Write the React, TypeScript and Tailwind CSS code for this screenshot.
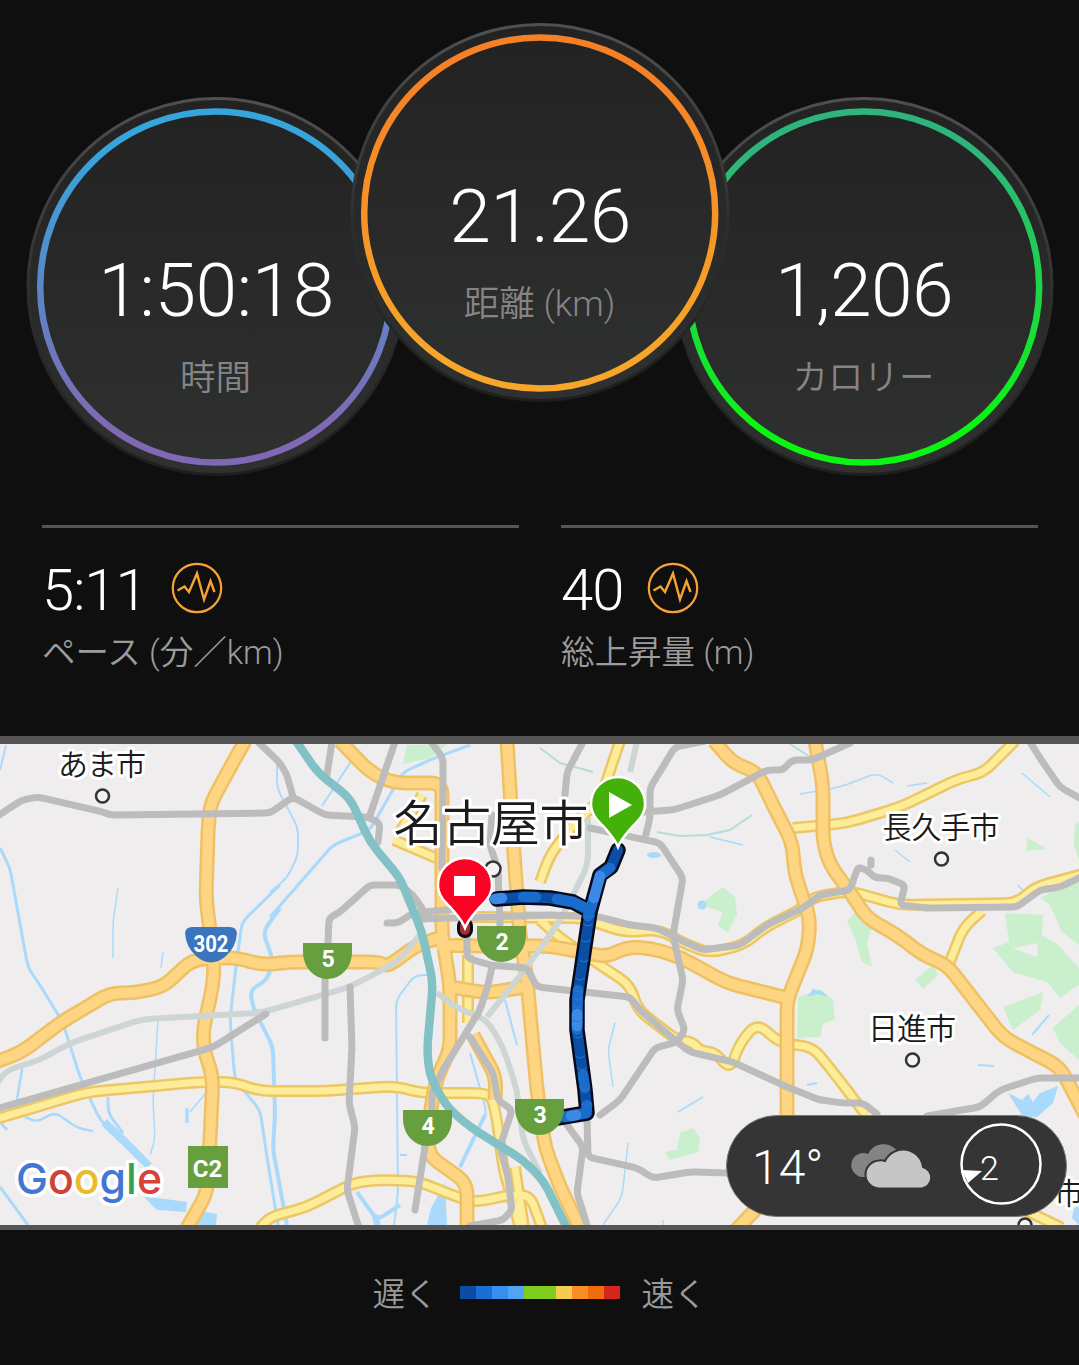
import { Fragment } from 'react';
import clsx from 'clsx';

const FONT = "font-['Roboto','Noto_Sans_CJK_JP',sans-serif]";

type RingProps = {
  id: string;
  value: string;
  label: string;
  from: string;
  to: string;
  className?: string;
};

function Ring({ id, value, label, from, to, className }: RingProps) {
  return (
    <div className={clsx('relative h-[380px] w-[380px] shrink-0', className)}>
      <svg viewBox="0 0 380 380" className="absolute inset-0 h-full w-full">
        <defs>
          <linearGradient id={`${id}-ring`} x1="0" y1="0" x2="0" y2="1">
            <stop offset="0.1" stopColor={from} />
            <stop offset="0.9" stopColor={to} />
          </linearGradient>
          <linearGradient id={`${id}-face`} x1="0" y1="0" x2="0" y2="1">
            <stop offset="0" stopColor="#222222" />
            <stop offset="1" stopColor="#2f3030" />
          </linearGradient>
          <linearGradient id={`${id}-rim`} x1="0" y1="0" x2="0" y2="1">
            <stop offset="0" stopColor="#505050" />
            <stop offset="0.55" stopColor="#2c2d2d" />
            <stop offset="1" stopColor="#1d1e1e" />
          </linearGradient>
        </defs>
        <circle cx="190" cy="189.500" r="188" fill={`url(#${id}-face)`} stroke={`url(#${id}-rim)`} strokeWidth="3" />
        <circle cx="189.700" cy="190" r="175.500" fill="none" stroke={`url(#${id}-ring)`} strokeWidth="6.500" />
      </svg>
      <div className="relative flex flex-col items-center pt-[148px]">
        <span className="pl-[1px] text-[75px] leading-[90px] font-light tracking-[-0.6px] text-white">{value}</span>
        <span className="mt-[15px] text-[35.5px] leading-[56px] font-[350] text-[#858585]">{label}</span>
      </div>
    </div>
  );
}

function PulseIcon() {
  return (
    <svg viewBox="0 0 52 52" className="-mt-[5px] h-[52px] w-[52px]" fill="none" stroke="#f6a336">
      <circle cx="26" cy="26" r="24.200" strokeWidth="2.200" />
      <path d="M6.500 28.500l7-4 4.500 5.500 8-18.500 7 26 6.500-18.500 4 11" strokeWidth="2.400" />
    </svg>
  );
}

function Stat({ value, label }: { value: string; label: string }) {
  return (
    <div className="flex-1 border-t-[3px] border-[#555] pt-[32px]">
      <div className="flex h-[60px] items-center gap-[24px]">
        <span className="text-[58px] leading-[60px] font-light tracking-[-1px] text-white">{value}</span>
        <PulseIcon />
      </div>
      <div className="text-[33.5px] leading-[66px] font-[350] whitespace-nowrap text-[#9c9c9c]">{label}</div>
    </div>
  );
}

const WATER = [
  { w: 3, d: 'M0 848L10 868L28 968L40 985L63 1023L80 1077L100 1120L127 1147' },
  { w: 8, d: 'M104 1122L127 1144L149 1166' },
  { w: 2.5, d: 'M23 1063L17 1100M25 1117L37 1122L55 1112L77 1128L93 1131' },
  { w: 3, d: 'M108 1097V1113L123 1133M0 1187L28 1225M187 1108V1123M0 1122L7 1130' },
  { w: 1.5, d: 'M118 888L113 922V958M163 952L161 968M158 1020L153 1100L155 1140L150 1155M205 1094L190 1112' },
  { w: 3, d: 'M280 885L242 922L235 975L230 1020L235 1080L260 1110L267 1157L278 1225' },
  { w: 4, d: 'M280 908L263 932L273 960L267 980L250 990L253 1007L273 1047L275 1113L273 1150L287 1225' },
  { w: 3, d: 'M270 917L333 845L370 830L403 772L437 757L470 745' },
  { w: 2, d: 'M277 762V788L298 828V855L287 878L270 892M352 760L322 806M0 770L6 745' },
  { w: 2, d: 'M432 975H415L396 1000L398 1193L394 1225M400 1155H407' },
  { w: 2, d: 'M470 1053L487 1113L460 1167' },
  { w: 4, d: 'M485 1115L460 1167M357 1192L377 1220L400 1205' },
  { w: 1.5, d: 'M615 1023L608 1050L613 1087M678 1112L703 1097M628 1143L622 1197L603 1225M663 1220V1225' },
  { w: 1.5, d: 'M710 837L743 845M800 794L840 787L877 773L893 783M907 786L927 783M1022 773L1050 797M895 850L910 862M1018 885L1025 893' },
  { w: 2, d: 'M1049 1015L1032 1035M978 1065L994 1066M807 1085L817 1083M505 1000L517 1045' },
];

const GREENS = [
  '403,764 407,745 447,744 430,758',
  '703,902 723,887 735,897 737,915 727,933 718,925 723,912 710,908',
  '847,922 857,910 872,928 867,942 872,967 862,962 855,938',
  '1028,838 1047,849 1026,851',
  '1040,898 1058,888 1079,882 1079,945 1062,932 1050,905',
  '1005,913 1043,915 1042,935 1056,943 1079,968 1079,985 1060,998 1047,982 1013,972 993,948 1009,942',
  '915,980 933,965 938,975 923,989',
  '1003,1007 1043,992 1040,1010 1013,1030',
  '1053,1028 1073,1010 1079,1005 1079,1060 1060,1043',
  '798,997 820,990 833,1000 835,1020 823,1023 820,1037 797,1038',
  '665,1152 677,1150 680,1133 693,1128 700,1138 698,1152 670,1160',
  '1075,825 1079,822 1079,860 1074,845',
];

const YELLOW_ROADS = [
  'M793 828L847 823L900 807L960 778L983 773L1015 741',
  'M-4 1119L40 1106L87 1092L200 1082H233L260 1091H327L393 1086L423 1093H483L492 1097L497 1120L503 1167L520 1228',
  'M260 1228L270 1217L307 1207L353 1183L377 1180L417 1181L460 1198L477 1202L510 1195H530L542 1228',
  'M394 840L436 858M400 832L422 795',
  'M620 741L600 800L573 825L550 855L540 882',
  'M540 920L560 938L600 965L630 985L638 1010L677 1040L693 1042L700 1051L715 1052L730 1070L740 1043L757 1023L780 1043L813 1047L837 1077L866 1115',
  'M470 917L583 918L623 932L660 930L687 945L710 953L743 945L767 926L800 910L813 897L850 891L900 905L1017 903L1035 887L1083 874',
  'M982 911L963 928L949 964',
  'M468 955V1023M1025 1210L1062 1228M515 1167L524 1228',
];

const ORANGE_ROADS = [
  'M245 741L226 775L210 805L208 830L206 900L210 930L214 965L213 985L203 1030L204 1050L213 1077L210 1140L207 1193L187 1228',
  'M-4 1062L22 1052L60 1023L110 993H133L163 987L192 960L233 957L263 965L290 962H380L387 967L417 945L442 937',
  'M340 741L370 772L393 783H442V935L450 985V1050L437 1077L430 1113L428 1155L467 1183V1228',
  'M507 741L515 868L520 935L527 980L537 1090L545 1147L560 1187L580 1228',
  'M437 945L480 946L550 946L607 957L627 947L650 948L680 957L727 983L787 998',
  'M714 741L733 763L757 772L773 805L792 842L795 875L810 918L808 948L787 1000V1116',
  'M815 741L823 785V842L830 865L850 892L867 918L897 935L923 955L947 965L1003 1037L1027 1050L1060 1067L1085 1115',
  'M450 987L487 993L525 987M473 1035L496 1077L495 1100M736 1230L760 1205',
];

const RAILS = [
  'M-4 817L22 800L38 797L103 812L110 815L270 813L293 797L325 815L367 817L380 823L378 842',
  'M258 742L280 763L287 775L293 797M332 742L327 775M395 742L370 815',
  'M431 742L443 758V788L442 868M492 815L490 845L498 870L500 925',
  'M328 942L329 918L340 912L370 885H400L413 895L422 908M325 980V1038',
  'M387 923H398L413 913L470 908M420 919L550 915L600 917L630 925L657 928L680 940L703 950L740 945L767 925L803 908L820 895L850 890L858 867L867 870L875 878H887L905 885L900 905L927 908L1017 907L1040 890L1060 887L1083 876',
  'M467 935V958L490 965L527 968L537 987L630 997L640 1010L677 1042L690 1052L733 1062L787 1087L820 1100L843 1103H863L877 1114M927 1116L980 1107L1000 1090L1037 1078H1083',
  'M350 987L352 1047L349 1103L355 1127L347 1190L359 1228',
  'M492 967L488 985L480 1010L443 1070L432 1093V1113M425 1147L415 1210',
  'M470 1037L493 1073L498 1100L512 1110L500 1147L508 1177L512 1210L503 1220L470 1226',
  'M583 742L567 772L565 795M705 741L675 747L650 788V818L645 838',
  'M643 812L673 810L720 795L767 770H783L792 760H812L850 743',
  'M590 828L623 835L660 843L683 878L673 935L683 980L677 1010L685 1030L677 1042L655 1048L620 1100L600 1115',
  'M587 1120L588 1157L637 1168L653 1178L690 1172L727 1173M565 1122L583 1147L577 1193L588 1228',
  'M1030 742L1040 758L1060 787L1083 800M-4 1109L203 1050L213 1047L266 1014M871 860V865',
];

const LIGHT_RAILS = [
  'M-3 1083L7 1070L40 1060L70 1043L143 1019L260 1013L350 987L397 962L420 935',
  'M437 993L457 1008L487 1020L503 1047L517 1090L523 1140L540 1173',
  'M487 1017L517 980L550 935L563 915L588 865V818M637 742L630 772',
];

const RIVER = [
  'M296 741L318 773L350 798L370 842L400 878L422 932L433 983L427 1050L430 1077L447 1107L470 1127L523 1160L543 1180L567 1228',
];

const ROUTE = 'M618 850L611 867L600 875L590 912L585 945L577 1000V1030L585 1090L587 1113L557 1118';
const ROUTE_BRANCH = 'M497 899L523 897L550 898L573 902L588 910';

const ROUTE_PARTS = [
  { c: '#0b4ea6', d: ROUTE },
  { c: '#0b4ea6', d: ROUTE_BRANCH },
  { c: '#1a6ccb', d: 'M523 897H536M557 899L573 902L588 909' },
  { c: '#3c8ae6', d: 'M495 899L502 898' },
  { c: '#1a6ccb', d: 'M610 868L601 875M594 898L588 916M578 990L577 1030M583 1075L585 1088M587 1105L586 1113L565 1117' },
  { c: '#3c8ae6', d: 'M600 876L594 898M577 1014V1026M576 1115L571 1116' },
];

// tick marks where the colour of the track changes slightly
const ROUTE_TICKS = [
  [590, 916], [588, 924], [586, 940], [584, 960], [580, 978], [578, 990], [577, 998],
  [577, 1006], [577, 1020], [578, 1036], [580, 1056], [582, 1068], [585, 1088], [586, 1104],
];

const PLACES = [
  { name: 'あま市', x: 102, y: 775, size: 30, width: 88, dot: [102.5, 796], r: 6.5 },
  { name: '長久手市', x: 941, y: 838, size: 30, width: 117, dot: [941.5, 859], r: 6.5 },
  { name: '日進市', x: 912, y: 1039, size: 30, width: 88, dot: [912.5, 1060], r: 6.5 },
  { name: '市', x: 1069, y: 1204, size: 30, width: 29, dot: [1025, 1225], r: 6.5 },
  { name: '名古屋市', x: 491, y: 841, size: 49, width: 195, dot: [493, 869], r: 7.5 },
];

const SHIELDS = [
  { n: '5', x: 303, y: 943 },
  { n: '2', x: 477, y: 926 },
  { n: '4', x: 403, y: 1110 },
  { n: '3', x: 515, y: 1099 },
];

const GOOGLE = [
  ['G', '#4176d3'],
  ['o', '#d04237'],
  ['o', '#e9bb2d'],
  ['g', '#4176d3'],
  ['l', '#36a057'],
  ['e', '#d9403a'],
];

// rounds the corners of an M/L/H/V path so that roads bend instead of breaking
function soften(d: string, radius = 12) {
  const lines: number[][][] = [];
  for (const [, cmd, args] of d.matchAll(/([MLHV])([^MLHV]*)/g)) {
    const nums = args.trim().split(/\s+/).map(Number);
    const line = lines[lines.length - 1];
    if (cmd === 'M') lines.push([nums]);
    if (cmd === 'L') line.push(nums);
    if (cmd === 'H') line.push([nums[0], line[line.length - 1][1]]);
    if (cmd === 'V') line.push([line[line.length - 1][0], nums[0]]);
  }
  const toward = (a: number[], b: number[]) => {
    const length = Math.hypot(b[0] - a[0], b[1] - a[1]) || 1;
    const t = Math.min(radius / length, 0.5);
    return `${(a[0] + (b[0] - a[0]) * t).toFixed(1)} ${(a[1] + (b[1] - a[1]) * t).toFixed(1)}`;
  };
  return lines
    .map((line) =>
      line
        .map((p, i) => {
          if (i === 0) return `M${p[0]} ${p[1]}`;
          if (i === line.length - 1) return `L${p[0]} ${p[1]}`;
          return `L${toward(p, line[i - 1])}Q${p[0]} ${p[1]} ${toward(p, line[i + 1])}`;
        })
        .join(''),
    )
    .join('');
}

function Roads({ paths, edge, fill, width }: { paths: string[]; edge: string; fill: string; width: number }) {
  const d = soften(paths.join(''));
  return (
    <>
      <path d={d} stroke={edge} strokeWidth={width} />
      <path d={d} stroke={fill} strokeWidth={width - 5} />
    </>
  );
}

function Pin({ x, y, color }: { x: number; y: number; color: string }) {
  return (
    <path
      transform={`translate(${x} ${y})`}
      d="M0 0C-3 -8 -8 -13 -14 -20C-21 -27 -27 -33 -27 -43A27 27 0 0 1 27 -43C27 -33 21 -27 14 -20C8 -13 3 -8 0 0Z"
      fill={color}
      stroke="#fff"
      strokeWidth="2.500"
    />
  );
}

function RouteMap() {
  return (
    <svg viewBox="0 744 1079 481" className="block h-[481px] w-full bg-[#f0edee]">
      <g fill="#c9efcd">
        {GREENS.map((points) => (
          <polygon key={points} points={points} />
        ))}
      </g>
      <polygon points="1013,948 1038,943 1037,957" fill="#f0edee" />

      <g fill="#a9dafb">
        <polygon points="143,1196 187,1202 186,1212 157,1210" />
        <polygon points="200,1211 217,1214 216,1226 198,1226" />
        <polygon points="1008,1093 1022,1100 1028,1094 1033,1102 1040,1093 1058,1086 1053,1103 1037,1117 1023,1117" />
        <polygon points="445,1183 447,1225 427,1225 431,1208" />
        <polygon points="371,1212 378,1215 381,1225 374,1225" />
        <polygon points="1074,1208 1079,1206 1079,1225 1072,1218" />
        <path d="M807 997L813 989L822 991L828 997L818 994Z" />
        <ellipse cx="654" cy="855" rx="7" ry="3" />
        <circle cx="702" cy="905" r="4.500" />
      </g>

      <g fill="none" stroke="#a9dafb" strokeLinejoin="round">
        {WATER.map((line) => (
          <path key={line.d} d={soften(line.d, 8)} strokeWidth={line.w} />
        ))}
      </g>

      <g fill="none" strokeLinejoin="round">
        <path d="M540 748L560 763L593 772M657 832L680 836L707 835L730 830L752 815M790 744L810 757" stroke="#b7dbdb" strokeWidth="2" />
        <Roads paths={YELLOW_ROADS} edge="#ecc765" fill="#fdec98" width={12} />
        <Roads paths={ORANGE_ROADS} edge="#efc165" fill="#fdd583" width={15} />
        <path d={soften(LIGHT_RAILS.join(''))} stroke="#cdd5d5" strokeWidth="6" />
        <path d={soften(RAILS.join(''), 5)} stroke="#bcbcbc" strokeWidth="7" strokeLinecap="round" />
        <path d={soften(RIVER.join(''))} stroke="#82c2c6" strokeWidth="8.500" />
      </g>

      <g className={FONT} textAnchor="middle" fill="#1b1b1b" fontWeight="350">
        {PLACES.map((place) => (
          <Fragment key={place.name}>
            <text
              x={place.x}
              y={place.y}
              fontSize={place.size}
              textLength={place.width}
              stroke="#fff"
              strokeWidth="6"
              strokeLinejoin="round"
              paintOrder="stroke"
            >
              {place.name}
            </text>
            <circle cx={place.dot[0]} cy={place.dot[1]} r={place.r} fill="#f3f3f3" stroke="#333" strokeWidth="2.500" />
          </Fragment>
        ))}
      </g>

      {/* Track */}
      <g fill="none" strokeLinecap="round" strokeLinejoin="round">
        <path d={ROUTE + ROUTE_BRANCH} stroke="#060a1c" strokeWidth="15.500" />
        <path d="M465 926V930" stroke="#0a0a12" strokeWidth="16" />
        <path d="M465 926V930" stroke="#a52a3a" strokeWidth="10" />
        {ROUTE_PARTS.map((part, i) => (
          <path key={i} d={part.d} stroke={part.c} strokeWidth="10.500" />
        ))}
        {ROUTE_TICKS.map(([x, y]) => (
          <path key={y} d={`M${x - 4.5} ${y}q4.500 4 9 0`} stroke="#2a78d6" strokeWidth="1" />
        ))}
      </g>

      {/* Road signs */}
      <g className={FONT} textAnchor="middle" fill="#fff" fontWeight="700" fontSize="23">
        <path d="M185 933Q186 927 192 927H230Q236 927 237 933Q236 947 226 956Q211 969 196 956Q186 947 185 933Z" fill="#3b74bf" />
        <text x="211" y="951.500" textLength="35" lengthAdjust="spacingAndGlyphs">302</text>
        {SHIELDS.map(({ n, x, y }) => (
          <Fragment key={n}>
            <path d={`M${x} ${y}h49v9c0 15-11 27-24.500 27s-24.500-12-24.500-27z`} fill="#679f3f" />
            <text x={x + 25} y={y + 23.5}>{n}</text>
          </Fragment>
        ))}
        <rect x="188" y="1146" width="40" height="42" fill="#679f3f" />
        <text x="207.500" y="1176.500" fontSize="24">C2</text>
      </g>

      <Pin x={618} y={847} color="#44b00a" />
      <path d="M609 792L632 805L609 818Z" fill="#fff" />
      <Pin x={465} y={928} color="#fb0324" />
      <rect x="454" y="876" width="21" height="20" fill="#fff" />

      <text
        x="16"
        y="1193.500"
        className="font-['Inter',sans-serif]"
        fontSize="43"
        fontWeight="500"
        textLength="146"
        lengthAdjust="spacingAndGlyphs"
        stroke="#fff"
        strokeWidth="7"
        strokeLinejoin="round"
        paintOrder="stroke"
      >
        {GOOGLE.map(([letter, color], i) => (
          <tspan key={i} fill={color}>{letter}</tspan>
        ))}
      </text>
    </svg>
  );
}

function Weather() {
  return (
    <div className="absolute top-[371px] left-[726px] flex h-[102px] w-[341px] items-center rounded-full border border-[#777] bg-[#353535] pl-[25px] text-white">
      <span className="w-[72px] pt-[3px] text-[48px] leading-none font-light">14°</span>
      <svg viewBox="0 0 82 48" className="ml-[27px] h-[48px] w-[82px]">
        <path d="M13 35A12 12 0 1 1 17 12A17 17 0 0 1 46 9V35Z" fill="#848484" />
        <path
          d="M29 46.500A13.500 13.500 0 0 1 28 18.500Q31 18 34 19A20 20 0 0 1 72 25A11 11 0 0 1 71 46.500Z"
          fill="#c6c6c6"
          stroke="#353535"
          strokeWidth="2"
        />
      </svg>
      <div className="relative -mt-[4px] ml-[27px] h-[82px] w-[82px]">
        <svg viewBox="0 0 82 82" className="absolute inset-0 h-full w-full">
          <circle cx="41" cy="41" r="39.500" fill="none" stroke="#fff" strokeWidth="2.500" />
          <path d="M2 47L22 48L8 60Z" fill="#fff" />
        </svg>
        <span className="relative flex h-full items-center pt-[7px] pl-[20px] text-[34px] leading-none font-light">2</span>
      </div>
    </div>
  );
}

const LEGEND = [
  'bg-[#0b4da2]',
  'bg-[#1b6fd2]',
  'bg-[#388fee]',
  'bg-[#50a4f5]',
  'bg-[#80cd1d]',
  'bg-[#80cd1d]',
  'bg-[#f6cb51]',
  'bg-[#f88f24]',
  'bg-[#ef6d0c]',
  'bg-[#d4261e]',
];

export default function App() {
  return (
    <div className={clsx('flex h-[1365px] w-[1079px] flex-col overflow-hidden bg-[#0f0f0f]', FONT)}>
      <div className="flex h-[525px] justify-center pt-[23px]">
        <Ring id="time" value="1:50:18" label="時間" from="#36a5dc" to="#8069b3" className="mt-[74px]" />
        <Ring id="distance" value="21.26" label="距離 (km)" from="#f58026" to="#f7a629" className="z-10 -mx-[56px]" />
        <Ring id="calories" value="1,206" label="カロリー" from="#2fb47c" to="#0cf512" className="mt-[74px]" />
      </div>

      <div className="flex h-[211px] gap-[42px] pr-[41px] pl-[42px]">
        <Stat value="5:11" label="ペース (分／km)" />
        <Stat value="40" label="総上昇量 (m)" />
      </div>

      <div className="relative border-t-[8px] border-b-[5px] border-[#555]">
        <RouteMap />
        <Weather />
      </div>

      <div className="flex flex-1 items-center justify-center gap-[22px] pb-[4px] text-[32.5px] font-[350] text-[#9a9a9a]">
        <span>遅く</span>
        <div className="mb-[6px] flex">
          {LEGEND.map((color, i) => (
            <span key={i} className={clsx('h-[13px] w-4', color)} />
          ))}
        </div>
        <span>速く</span>
      </div>
    </div>
  );
}
